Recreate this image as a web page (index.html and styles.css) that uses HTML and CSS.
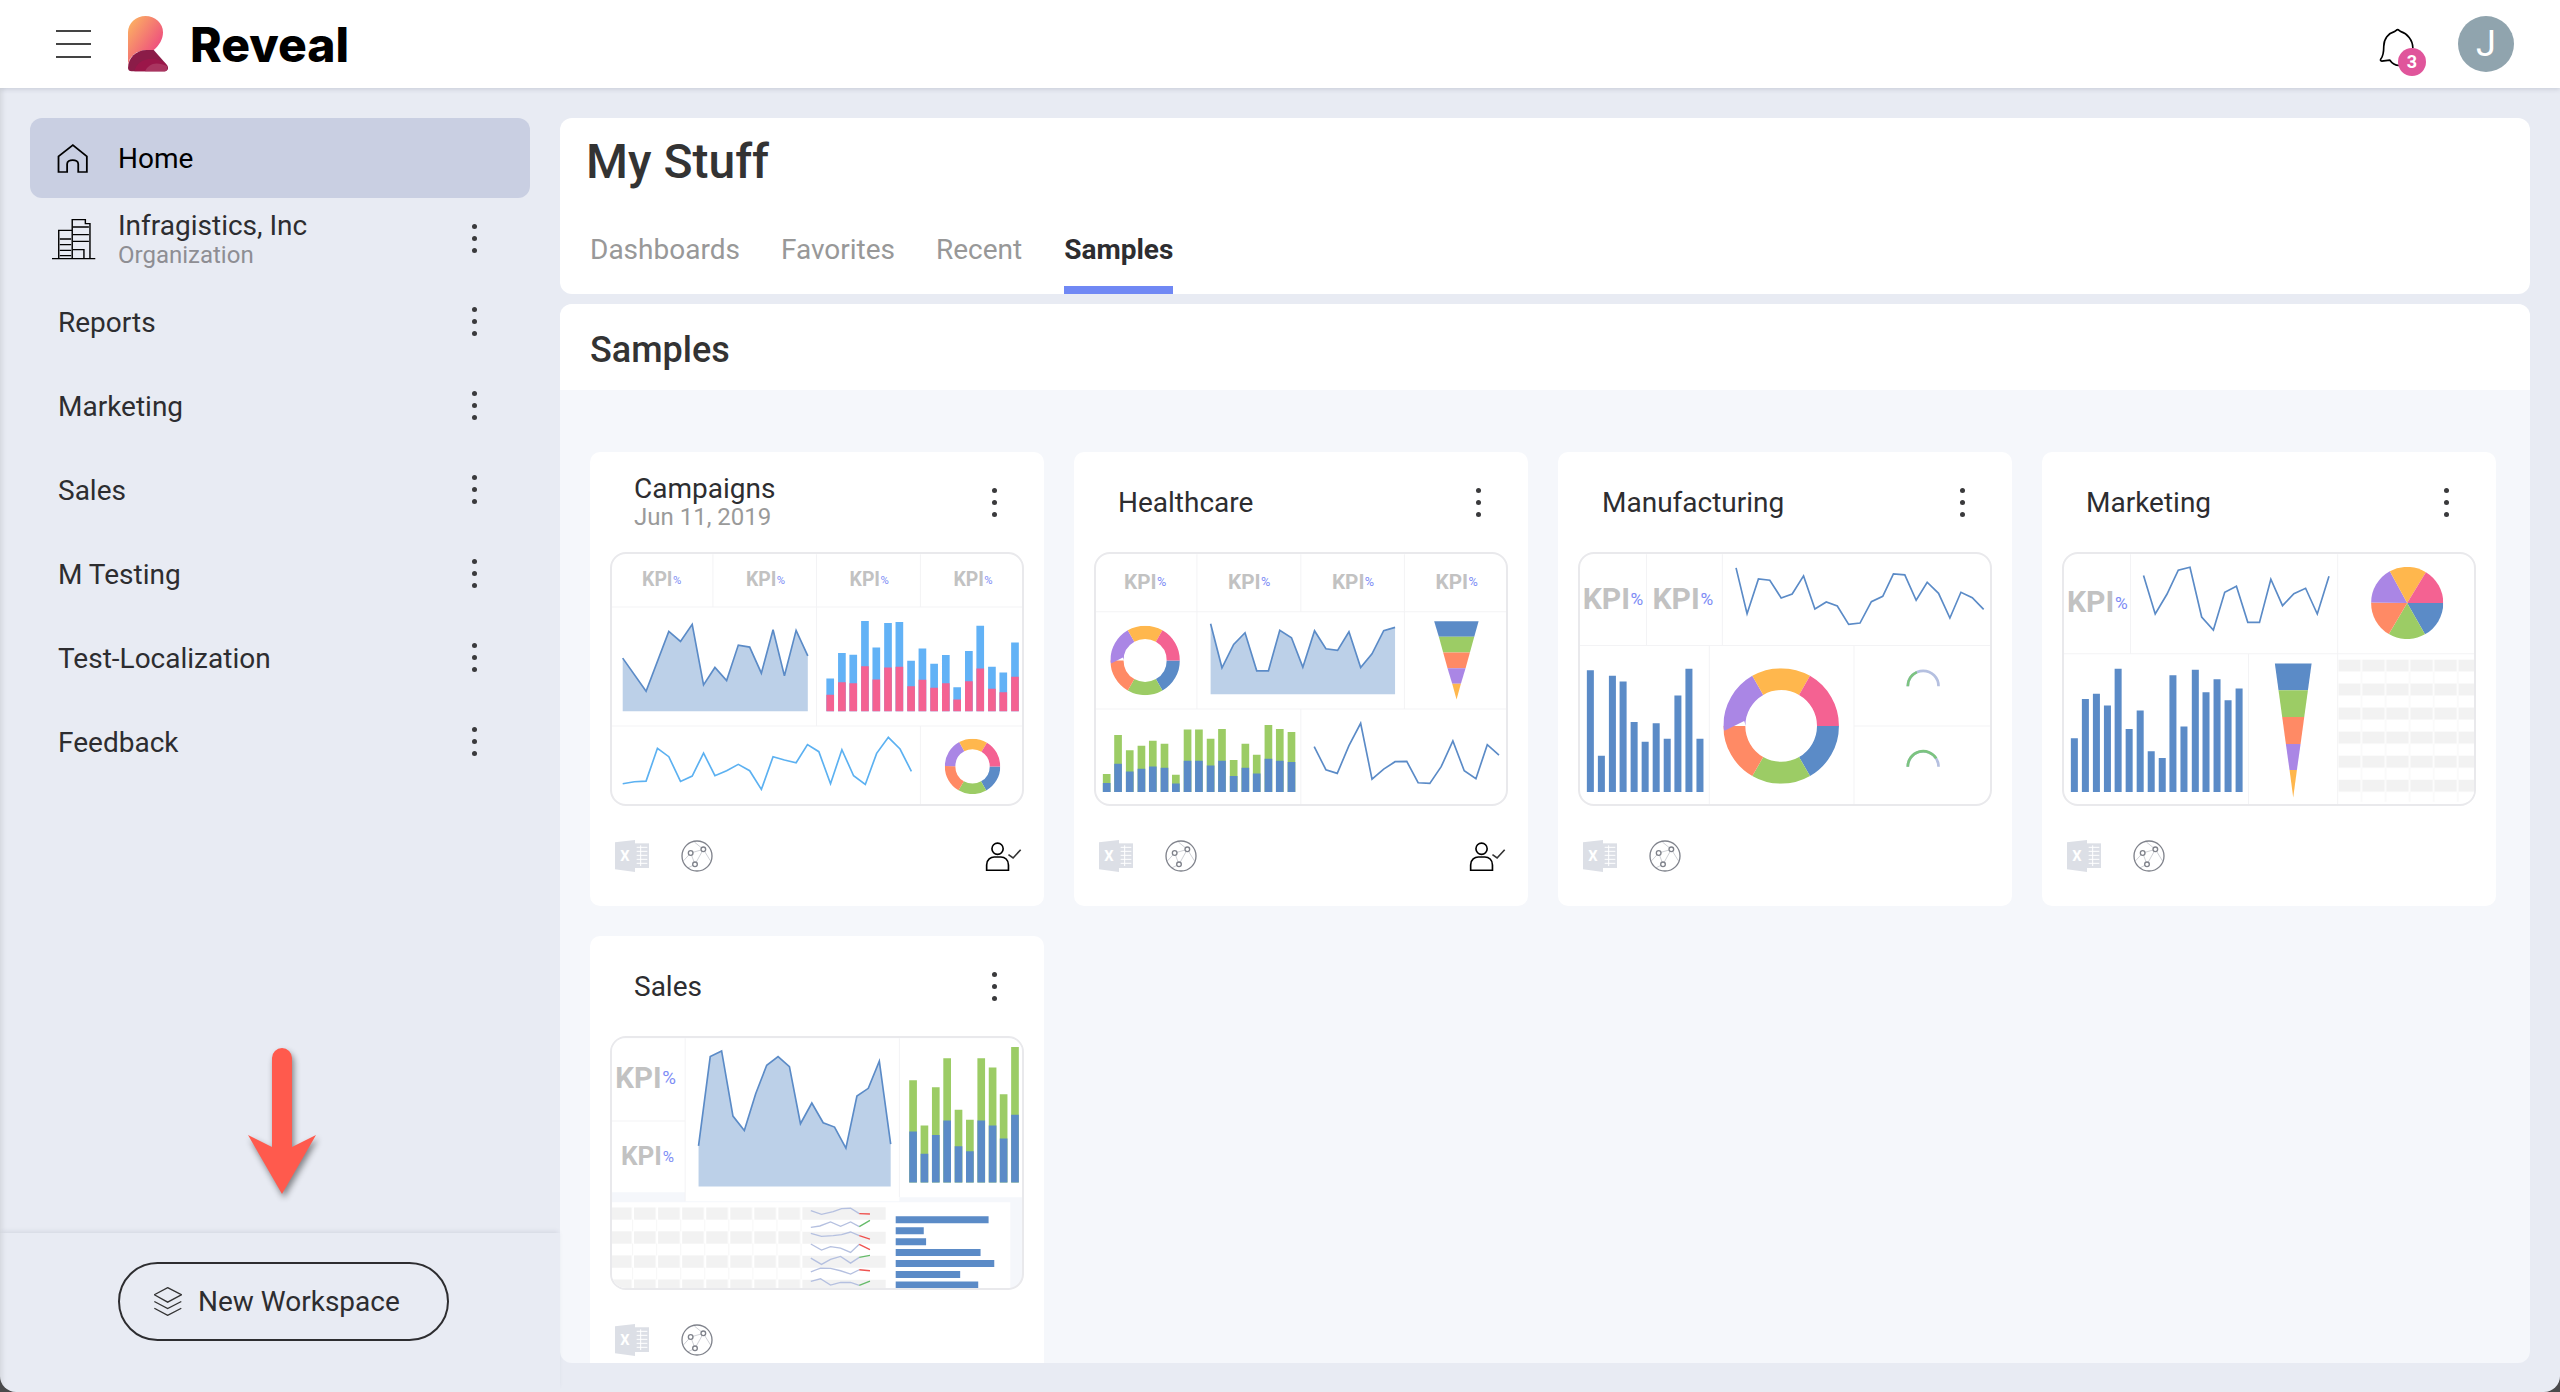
FILE: index.html
```html
<!DOCTYPE html>
<html lang="en">
<head>
    <meta charset="utf-8" />
    <title>Reveal - My Stuff</title>
    <link rel="stylesheet" href="styles.css">
</head>
<body>

<!-- shared icons and chart parts -->
<svg class="sprite" aria-hidden="true">
    <defs>
        <symbol id="i-excel" viewBox="105 1200 102 96">
            <path fill="#dcdfe6" d="M105 1207 165 1200V1296L105 1288Z"/>
            <path fill="#dcdfe6" d="M165 1210H207V1284H165Z"/>
            <path fill="none" stroke="#fff" stroke-width="3" d="M170 1222H202M170 1234H202M170 1246H202M170 1258H202M170 1270H202M182 1216V1278"/>
            <text x="135" y="1263" text-anchor="middle" class="xl">X</text>
        </symbol>
        <symbol id="i-net" viewBox="300 1200 96 96">
            <path fill="none" stroke="#cfd1d6" stroke-width="3" d="M329 1239 367 1228M329 1239 342 1273M367 1228 342 1273M329 1239 308 1262M367 1228 340 1206M367 1228 388 1262M342 1273 320 1284"/>
            <circle cx="348" cy="1248" r="45" fill="none" stroke="#7f828b" stroke-width="4"/>
            <g fill="#fff" stroke="#7f828b" stroke-width="4">
                <circle cx="329" cy="1239" r="7"/><circle cx="367" cy="1228" r="7"/><circle cx="342" cy="1273" r="7"/>
            </g>
        </symbol>
        <symbol id="i-user" viewBox="1214 1205 112 90">
            <g fill="none" stroke="#000" stroke-width="5">
                <circle cx="1252" cy="1225" r="17"/>
                <path d="M1219 1290V1274C1219 1258 1232 1250 1242 1250H1262C1274 1250 1285 1258 1285 1274V1290Z"/>
                <path stroke="#333" d="M1285 1243 1299 1253 1322 1228"/>
            </g>
        </symbol>
        <symbol id="c-donut" viewBox="-100 -100 200 200">
            <g fill="none" stroke-width="38">
                <circle r="81" pathLength="6" stroke-dasharray="1 5" stroke="#5b8bc7"/>
                <circle r="81" pathLength="6" stroke-dasharray="1 5" stroke-dashoffset="-1" stroke="#9ccc65"/>
                <circle r="81" pathLength="6" stroke-dasharray="1 5" stroke-dashoffset="-2" stroke="#ff8a65"/>
                <circle r="81" pathLength="6" stroke-dasharray="1 5" stroke-dashoffset="-3" stroke="#aa86e5"/>
                <circle r="81" pathLength="6" stroke-dasharray="1 5" stroke-dashoffset="-4" stroke="#ffb74d"/>
                <circle r="81" pathLength="6" stroke-dasharray="1 5" stroke-dashoffset="-5" stroke="#f46292"/>
            </g>
        </symbol>
        <symbol id="c-pie" viewBox="-100 -100 200 200">
            <g fill="none" stroke-width="100">
                <circle r="50" pathLength="6" stroke-dasharray="1 5" stroke="#5b8bc7"/>
                <circle r="50" pathLength="6" stroke-dasharray="1 5" stroke-dashoffset="-1" stroke="#9ccc65"/>
                <circle r="50" pathLength="6" stroke-dasharray="1 5" stroke-dashoffset="-2" stroke="#ff8a65"/>
                <circle r="50" pathLength="6" stroke-dasharray="1 5" stroke-dashoffset="-3" stroke="#aa86e5"/>
                <circle r="50" pathLength="6" stroke-dasharray="1 5" stroke-dashoffset="-4" stroke="#ffb74d"/>
                <circle r="50" pathLength="6" stroke-dasharray="1 5" stroke-dashoffset="-5" stroke="#f46292"/>
            </g>
        </symbol>
        <pattern id="p-table" x="955" y="657" width="72" height="72" patternUnits="userSpaceOnUse">
            <rect x="67" width="5" height="72" fill="#fbfbfb"/>
            <rect y="36" width="72" height="36" fill="#fff"/>
            <rect x="68" y="36" width="3" height="36" fill="#f6f6f6"/>
            <rect width="66" height="36" fill="#f2f2f2"/>
        </pattern>
        <pattern id="p-table2" x="92" y="830" width="72" height="72" patternUnits="userSpaceOnUse">
            <rect x="66" y="36" width="3" height="36" fill="#f6f6f6"/>
            <rect width="65" height="37" fill="#f2f2f2"/>
        </pattern>
        <linearGradient id="g-logo" x1="0" y1="0" x2="1" y2="1">
            <stop offset="0" stop-color="#fdbb5f"/>
            <stop offset=".75" stop-color="#ee4f7e"/>
        </linearGradient>
    </defs>
</svg>

<div class="app">
    <header class="topbar">
        <div class="burger"><span></span><span></span><span></span></div>
        <svg class="logo" viewBox="358 47 112 170" preserveAspectRatio="none">
            <path fill="url(#g-logo)" d="M358 96a49 49 0 0 1 98 0c0 20-10 40-26 54h-20c-26 0-52 20-52 50Z"/>
            <path fill="#8b1c48" d="M358 205c0-30 22-55 52-55h20l36 44c8 10 4 21-6 21H368c-6 0-10-4-10-10Z"/>
            <path fill="#9b1649" d="M376 215c4-24 26-40 52-38 12 1 24 6 34 14 8 10 6 24-2 24Z"/>
            <path fill="#a93560" d="M406 215c4-14 18-24 32-24 10 0 20 3 29 8 3 8 0 16-7 16Z"/>
        </svg>
        <div class="brand">Reveal</div>
        <div class="topbar-right">
            <div class="bell">
                <svg viewBox="230 80 120 130" width="40" height="43">
                    <path fill="none" stroke="#000" stroke-width="5" stroke-linejoin="round" d="M292 88c-4 0-6 5-10 6-18 5-32 22-32 44 0 18-2 30-9 39-2 3-1 6 3 6l24-3c8 12 20 18 34 16M292 88c4 0 6 5 10 6 18 5 36 25 36 50"/>
                </svg>
                <span class="badge">3</span>
            </div>
            <div class="avatar">J</div>
        </div>
    </header>

    <div class="layout">
        <aside class="sidebar">
            <nav class="nav">
                <div class="nav-item nav-item--active">
                    <svg class="nav-icon" viewBox="160 428 92 92" preserveAspectRatio="none" width="33" height="31">
                        <path fill="none" stroke="#000" stroke-width="5" d="M167 514V468L207 434 246 468V514H222V490C222 475 191 475 191 490V514Z"/>
                    </svg>
                    Home
                </div>
                <div class="nav-item nav-item--org">
                    <svg class="nav-icon nav-icon--org" viewBox="146 655 124 126" preserveAspectRatio="none" width="44" height="42">
                        <g fill="none" stroke="#000" stroke-width="4">
                            <path d="M146 777H268"/>
                            <path d="M165 777V692H203M203 777V660H240V672H253V777"/>
                            <path d="M168 718H200M168 735H200M168 752H200M168 768H200M205 682H250M205 705H250M205 725H250"/>
                            <path d="M205 750H236V777"/>
                        </g>
                    </svg>
                    <div class="org-text">
                        <div>Infragistics, Inc</div>
                        <div class="org-sub">Organization</div>
                    </div>
                    <span class="kebab"></span>
                </div>
                <div class="nav-item">Reports<span class="kebab"></span></div>
                <div class="nav-item">Marketing<span class="kebab"></span></div>
                <div class="nav-item">Sales<span class="kebab"></span></div>
                <div class="nav-item">M Testing<span class="kebab"></span></div>
                <div class="nav-item">Test-Localization<span class="kebab"></span></div>
                <div class="nav-item">Feedback<span class="kebab"></span></div>
            </nav>
            <div class="sidebar-foot">
                <button class="btn-new">
                    <svg viewBox="430 803 82 86" preserveAspectRatio="none" width="28" height="29">
                        <path fill="none" stroke="#333" stroke-width="4" d="M470 805 510 826 470 848 431 826ZM431 846 470 867 510 846M431 866 470 887 510 866"/>
                    </svg>
                    New Workspace
                </button>
            </div>
            <!-- annotation arrow lying over the sidebar -->
            <svg class="arrow" viewBox="0 0 68 146" width="68" height="146">
                <path fill="#ff5a4d" d="M24 10a10 10 0 0 1 20 0V99L68 87 34 146 0 87 24 99Z"/>
            </svg>
        </aside>

        <main class="main">
            <section class="panel panel--head">
                <h1>My Stuff</h1>
                <div class="tabs">
                    <div class="tab">Dashboards</div>
                    <div class="tab">Favorites</div>
                    <div class="tab">Recent</div>
                    <div class="tab tab--active">Samples</div>
                </div>
            </section>

            <section class="panel panel--body">
                <h2>Samples</h2>
                <div class="cards">

                    <article class="card">
                        <div class="card-head">
                            <div class="card-title">
                                <div>Campaigns</div>
                                <div class="card-date">Jun 11, 2019</div>
                            </div>
                            <span class="kebab"></span>
                        </div>
                        <div class="thumb">
                            <svg viewBox="98 342 1227 747">
                                <path class="grid" d="M400 342V500M710 342V856M1021 342V500M98 500H1325M98 856H1325M1021 856V1090"/>
                                <text class="kpi" x="188" y="437" font-size="58">KPI<tspan class="pct" font-size="34" dx="1" dy="-7">%</tspan></text>
                                <text class="kpi" x="499" y="437" font-size="58">KPI<tspan class="pct" font-size="34" dx="1" dy="-7">%</tspan></text>
                                <text class="kpi" x="809" y="437" font-size="58">KPI<tspan class="pct" font-size="34" dx="1" dy="-7">%</tspan></text>
                                <text class="kpi" x="1120" y="437" font-size="58">KPI<tspan class="pct" font-size="34" dx="1" dy="-7">%</tspan></text>
                                <path class="area" d="M130 812V653L200 752 268 573 303 603 338 552 372 733 406 681 441 720 476 614 510 620 545 698 580 568 614 706 649 570 684 646V812Z"/>
                                <path class="line" d="M130 653 200 752 268 573 303 603 338 552 372 733 406 681 441 720 476 614 510 620 545 698 580 568 614 706 649 570 684 646"/>
                                <path class="bars bars--w23" stroke="#62b2f6" d="M751 812V714M786 812V638M820 812V643M855 812V542M889 812V621M924 812V548M958 812V545M993 812V661M1027 812V624M1062 812V670M1097 812V644M1131 812V740M1166 812V632M1200 812V556M1235 812V679M1269 812V696M1304 812V606"/>
                                <path class="bars bars--w23" stroke="#f46292" d="M751 812V763M786 812V725M820 812V728M855 812V677M889 812V717M924 812V681M958 812V679M993 812V737M1027 812V718M1062 812V742M1097 812V728M1131 812V777M1166 812V722M1200 812V684M1235 812V745M1269 812V755M1304 812V709"/>
                                <path class="line line--sky" d="M130 1029 165 1023 200 1021 234 923 268 948 303 1022 338 1006 372 937 406 1005 441 990 476 971 510 990 545 1046 580 948 614 958 649 966 683 912 717 933 752 1029 786 927 821 1005 856 1031 890 938 925 890 960 925 994 992"/>
                                <use href="#c-donut" x="1094" y="894" width="166" height="166"/>
                            </svg>
                        </div>
                        <div class="card-foot">
                            <svg class="i-excel"><use href="#i-excel"/></svg>
                            <svg class="i-net"><use href="#i-net"/></svg>
                            <svg class="i-user"><use href="#i-user"/></svg>
                        </div>
                    </article>

                    <article class="card">
                        <div class="card-head">
                            <div class="card-title">Healthcare</div>
                            <span class="kebab"></span>
                        </div>
                        <div class="thumb">
                            <svg viewBox="110 342 1227 747">
                                <path class="grid" d="M412 342V805M723 342V514M1033 342V805M110 514H1337M110 805H1337M723 805V1090"/>
                                <text class="kpi" x="194" y="445" font-size="62">KPI<tspan class="pct" font-size="38" dx="1" dy="-7">%</tspan></text>
                                <text class="kpi" x="505" y="445" font-size="62">KPI<tspan class="pct" font-size="38" dx="1" dy="-7">%</tspan></text>
                                <text class="kpi" x="816" y="445" font-size="62">KPI<tspan class="pct" font-size="38" dx="1" dy="-7">%</tspan></text>
                                <text class="kpi" x="1126" y="445" font-size="62">KPI<tspan class="pct" font-size="38" dx="1" dy="-7">%</tspan></text>
                                <use href="#c-donut" x="153" y="556" width="208" height="208"/>
                                <path class="area" d="M453 761V550L487 682 522 612 556 577 591 691 626 691 660 570 695 592 729 680 764 571 798 625 833 630 867 574 902 681 936 640 971 571 1005 561V761Z"/>
                                <path class="line" d="M453 550 487 682 522 612 556 577 591 691 626 691 660 570 695 592 729 680 764 571 798 625 833 630 867 574 902 681 936 640 971 571 1005 561"/>
                                <path fill="#5b8bc7" d="M1122 543H1255L1242 589H1136Z"/>
                                <path fill="#9ccc65" d="M1136 589H1242L1229 636H1149Z"/>
                                <path fill="#ff8a65" d="M1149 636H1229L1216 683H1162Z"/>
                                <path fill="#aa86e5" d="M1162 683H1216L1202 730H1176Z"/>
                                <path fill="#ffb74d" d="M1176 730H1202L1189 777Z"/>
                                <path class="bars bars--w23" stroke="#9ccc65" d="M142 1054V1000M176 1054V883M211 1054V929M246 1054V915M280 1054V900M315 1054V909M349 1054V1002M384 1054V867M418 1054V867M453 1054V894M487 1054V865M522 1054V958M557 1054V909M591 1054V942M626 1054V853M660 1054V865M695 1054V874"/>
                                <path class="bars bars--w23" stroke="#5b8bc7" d="M142 1054V1027M176 1054V969M211 1054V992M246 1054V984M280 1054V977M315 1054V981M349 1054V1028M384 1054V960M418 1054V960M453 1054V974M487 1054V960M522 1054V1006M557 1054V981M591 1054V998M626 1054V954M660 1054V960M695 1054V964"/>
                                <path class="line" d="M763 918 798 987 832 998 867 915 902 848 936 1015 971 985 1005 963 1040 962 1074 1026 1109 1028 1143 978 1178 901 1212 990 1247 1014 1281 912 1316 943"/>
                            </svg>
                        </div>
                        <div class="card-foot">
                            <svg class="i-excel"><use href="#i-excel"/></svg>
                            <svg class="i-net"><use href="#i-net"/></svg>
                            <svg class="i-user"><use href="#i-user"/></svg>
                        </div>
                    </article>

                    <article class="card">
                        <div class="card-head">
                            <div class="card-title">Manufacturing</div>
                            <span class="kebab"></span>
                        </div>
                        <div class="thumb">
                            <svg viewBox="122 342 1227 747">
                                <path class="grid" d="M321 342V615M548 342V615M122 615H1349M509 615V1090M942 615V1090M942 856H1349"/>
                                <text class="kpi" x="130" y="505" font-size="90">KPI<tspan class="pct" font-size="52" dx="2" dy="-10">%</tspan></text>
                                <text class="kpi" x="339" y="505" font-size="90">KPI<tspan class="pct" font-size="52" dx="2" dy="-10">%</tspan></text>
                                <path class="line" d="M589 383 622 520 656 416 690 420 724 473 757 461 791 407 825 506 859 485 892 497 926 552 960 548 994 484 1028 468 1060 401 1094 404 1128 480 1161 426 1195 459 1229 533 1262 456 1296 472 1330 507"/>
                                <path class="bars bars--w21" stroke="#5b8bc7" d="M153 1054V689M186 1054V945M219 1054V706M251 1054V723M284 1054V844M317 1054V903M350 1054V848M383 1054V894M415 1054V765M448 1054V685M481 1054V894"/>
                                <use href="#c-donut" x="551" y="683" width="346" height="346"/>
                                <path class="gauge" d="M1103 737A46 46 0 0 1 1195 737"/>
                                <path class="gauge gauge--on" d="M1103 737A46 46 0 0 1 1130 695"/>
                                <path class="gauge" d="M1103 978A46 46 0 0 1 1195 978"/>
                                <path class="gauge gauge--on" d="M1103 978A46 46 0 0 1 1188 953"/>
                            </svg>
                        </div>
                        <div class="card-foot">
                            <svg class="i-excel"><use href="#i-excel"/></svg>
                            <svg class="i-net"><use href="#i-net"/></svg>
                        </div>
                    </article>

                    <article class="card">
                        <div class="card-head">
                            <div class="card-title">Marketing</div>
                            <span class="kebab"></span>
                        </div>
                        <div class="thumb">
                            <svg viewBox="134 342 1227 747">
                                <path class="grid" d="M333 342V640M953 342V1090M134 640H1361M686 640V1090"/>
                                <text class="kpi" x="143" y="516" font-size="90">KPI<tspan class="pct" font-size="52" dx="2" dy="-10">%</tspan></text>
                                <path class="line" d="M372 406 407 521 442 462 476 390 511 381 546 530 581 569 615 456 650 438 684 546 719 546 753 417 788 496 822 460 857 444 892 521 927 408"/>
                                <use href="#c-pie" x="1053" y="380" width="216" height="216"/>
                                <path class="bars bars--w21" stroke="#5b8bc7" d="M165 1054V893M198 1054V775M231 1054V760M264 1054V795M296 1054V685M329 1054V865M362 1054V810M395 1054V932M428 1054V952M460 1054V704M493 1054V858M527 1054V688M559 1054V755M592 1054V716M625 1054V779M658 1054V744"/>
                                <path fill="#5b8bc7" d="M765 669H875L864 749H776Z"/>
                                <path fill="#9ccc65" d="M776 749H864L853 829H787Z"/>
                                <path fill="#ff8a65" d="M787 829H853L842 910H798Z"/>
                                <path fill="#aa86e5" d="M798 910H842L831 988H809Z"/>
                                <path fill="#ffb74d" d="M809 988H831L820 1070Z"/>
                                <rect x="955" y="657" width="406" height="426" fill="url(#p-table)"/>
                            </svg>
                        </div>
                        <div class="card-foot">
                            <svg class="i-excel"><use href="#i-excel"/></svg>
                            <svg class="i-net"><use href="#i-net"/></svg>
                        </div>
                    </article>

                    <article class="card">
                        <div class="card-head">
                            <div class="card-title">Sales</div>
                            <span class="kebab"></span>
                        </div>
                        <div class="thumb thumb--pale">
                            <svg viewBox="98 324 1227 747">
                                <path fill="#fff" d="M98 324H958V812H317V785H98ZM958 324H1325V800H958ZM98 815H917V1090H98ZM917 815H1290V1090H917Z"/>
                                <path class="grid" d="M317 324V812M958 324V800M98 572H317"/>
                                <text class="kpi" x="108" y="474" font-size="88">KPI<tspan class="pct" font-size="56" dx="2" dy="-12">%</tspan></text>
                                <text class="kpi" x="125" y="705" font-size="78">KPI<tspan class="pct" font-size="46" dx="2" dy="-10">%</tspan></text>
                                <path class="area" d="M357 768V646L392 379 426 362 460 557 494 600 528 490 561 405 595 379 629 409 662 580 696 518 730 577 764 590 798 653 831 497 865 474 898 393 932 641V768Z"/>
                                <path class="line" d="M357 646 392 379 426 362 460 557 494 600 528 490 561 405 595 379 629 409 662 580 696 518 730 577 764 590 798 653 831 497 865 474 898 393 932 641"/>
                                <path class="bars bars--w23" stroke="#9ccc65" d="M999 756V450M1033 756V585M1067 756V471M1101 756V384M1135 756V538M1169 756V568M1203 756V384M1237 756V412M1270 756V492M1304 756V350"/>
                                <path class="bars bars--w23" stroke="#5b8bc7" d="M999 756V603M1033 756V670M1067 756V614M1101 756V570M1135 756V647M1169 756V662M1203 756V570M1237 756V585M1270 756V624M1304 756V553"/>
                                <rect x="92" y="830" width="576" height="260" fill="url(#p-table2)"/>
                                <path fill="#f2f2f2" d="M668 830H917V867H668ZM668 903H917V939H668ZM668 975H917V1011H668ZM668 1047H917V1083H668Z"/>
                                <path class="spark" d="M693 840 725 851 760 843 785 834 812 833 838 849M693 890 720 886 752 874 782 887 812 874 838 888M693 908 725 917 760 915 785 912 812 904 838 915M693 940 725 958 752 948 782 952 812 965 838 941M693 982 725 1001 752 986 782 977 812 997 838 980M693 1023 722 1012 752 1013 782 1020 812 1030 838 1017M693 1052 722 1044 752 1063 782 1055 812 1055 838 1064"/>
                                <path class="spark spark--down" d="M838 849 870 850M838 915 870 925M838 941 870 957M838 1017 870 1020"/>
                                <path class="spark spark--up" d="M838 888 870 869M838 980 870 974M838 1064 870 1051"/>
                                <path class="bars bars--w21" stroke="#5b8bc7" d="M947 867H1225M947 900H1031M947 933H1038M947 965H1201M947 998H1242M947 1031H1140M947 1063H1194"/>
                            </svg>
                        </div>
                        <div class="card-foot">
                            <svg class="i-excel"><use href="#i-excel"/></svg>
                            <svg class="i-net"><use href="#i-net"/></svg>
                        </div>
                    </article>

                </div>
            </section>
        </main>
    </div>
</div>

</body>
</html>
```

FILE: styles.css
```css
:root{
    --bg:#e8ebf3;
    --pale:#f5f7fb;
    --text:#2d2d30;
    --muted:#8e8e93;
    --accent:#7088f4;
    --blue:#5b8bc7;
}
*{
    box-sizing:border-box;
}
html,body{
    height:100%;
}
body{
    margin:0;
    background:#4a4a4c;
    font-family:Roboto,"Liberation Sans",sans-serif;
    color:var(--text);
    overflow:hidden;
}
h1,h2{
    margin:0;
}
.sprite{
    position:absolute;
    width:0;
    height:0;
}
.xl{
    font-family:Roboto,sans-serif;
    font-weight:700;
    font-size:44px;
    fill:#fff;
}
.app{
    height:100%;
    display:flex;
    flex-direction:column;
    background:var(--bg);
    border-radius:0 0 16px 16px;
    overflow:hidden;
}

/* top bar */
.topbar{
    flex:none;
    height:88px;
    display:flex;
    align-items:center;
    padding:0 46px 0 56px;
    background:#fff;
    box-shadow:0 1px 5px rgba(40,50,80,.18);
    position:relative;
    z-index:2;
}
.burger{
    width:35px;
    display:flex;
    flex-direction:column;
    gap:11px;
}
.burger span{
    height:2px;
    background:#444;
}
.logo{
    width:40px;
    height:56px;
    margin-left:37px;
}
.brand{
    margin-left:22px;
    font-family:Inter,Roboto,sans-serif;
    font-weight:800;
    font-size:48px;
    color:#000;
}
.topbar-right{
    margin-left:auto;
    display:flex;
    align-items:center;
    gap:41px;
}
.bell{
    position:relative;
    width:40px;
    height:43px;
    margin-top:8px;
}
.bell svg{
    display:block;
}
.badge{
    position:absolute;
    left:21px;
    top:21px;
    width:28px;
    height:28px;
    border-radius:50%;
    background:#e0559b;
    color:#fff;
    font-size:18px;
    font-weight:700;
    line-height:28px;
    text-align:center;
}
.avatar{
    width:56px;
    height:56px;
    border-radius:50%;
    background:#90a4ae;
    color:#fff;
    font-size:36px;
    line-height:56px;
    text-align:center;
}

/* layout */
.layout{
    flex:1;
    min-height:0;
    display:flex;
}
.sidebar{
    flex:none;
    width:560px;
    display:flex;
    flex-direction:column;
    position:relative;
    box-shadow:inset 7px 0 6px -6px rgba(0,0,0,.12);
}
.nav{
    flex:1;
    padding:30px 0 0;
}
.nav-item{
    width:500px;
    height:84px;
    margin-left:30px;
    padding-left:28px;
    display:flex;
    align-items:center;
    font-size:28px;
    position:relative;
}
.nav-item--active{
    height:80px;
    padding-left:26px;
    border-radius:12px;
    background:#c9cfe2;
    color:#000;
}
.nav-item--org{
    height:82px;
    padding-left:22px;
}
.nav-icon{
    flex:none;
    margin-right:29px;
}
.nav-icon--org{
    margin-right:22px;
}
.org-text{
    line-height:30px;
    padding-top:2px;
}
.org-sub{
    font-size:24px;
    line-height:28px;
    color:var(--muted);
}
.kebab{
    width:5px;
    height:5px;
    border-radius:50%;
    background:#3a3a3c;
    box-shadow:0 -12px 0 #3a3a3c,0 12px 0 #3a3a3c;
    flex:none;
}
.nav-item .kebab{
    position:absolute;
    left:442px;
    top:50%;
    margin-top:-3px;
}
.sidebar-foot{
    flex:none;
    height:159px;
    display:flex;
    padding:29px 0 0 118px;
    box-shadow:0 -3px 5px -2px rgba(40,50,80,.12);
}
.btn-new{
    width:331px;
    height:79px;
    display:flex;
    align-items:center;
    gap:16px;
    padding:0 0 0 34px;
    border:2px solid var(--text);
    border-radius:40px;
    background:none;
    color:var(--text);
    font:28px Roboto,sans-serif;
}
.arrow{
    position:absolute;
    left:248px;
    top:960px;
    filter:drop-shadow(2px 4px 3px rgba(0,0,0,.45));
}

/* main column */
.main{
    flex:1;
    min-width:0;
    display:flex;
    flex-direction:column;
    gap:10px;
    padding:30px 30px 29px 0;
}
.panel{
    border-radius:12px;
    background:#fff;
}
.panel--head{
    flex:none;
    height:176px;
    padding:14px 26px 0;
}
.panel--head h1{
    font-size:48px;
    font-weight:500;
    line-height:60px;
    color:#333;
}
.tabs{
    display:flex;
    gap:41px;
    margin-top:26px;
    padding-left:4px;
}
.tab{
    height:76px;
    padding-top:15px;
    font-size:28px;
    color:#989898;
}
.tab--active{
    margin-left:1px;
    color:#2d2d30;
    font-weight:700;
    border-bottom:8px solid var(--accent);
}
.panel--body{
    flex:1;
    min-height:0;
    overflow:hidden;
    background:var(--pale);
}
.panel--body h2{
    height:86px;
    padding:0 30px;
    background:#fff;
    font-size:36px;
    font-weight:500;
    line-height:92px;
    color:#333;
}

/* sample cards */
.cards{
    display:grid;
    grid-template-columns:repeat(4,454px);
    gap:30px;
    padding:62px 30px;
}
.card{
    height:454px;
    border-radius:10px;
    background:#fff;
}
.card-head{
    height:100px;
    display:flex;
    align-items:center;
    justify-content:space-between;
    padding:0 47px 0 44px;
    font-size:28px;
    line-height:29px;
}
.card-title{
    padding-top:1px;
}
.card-date{
    font-size:24px;
    color:#9a9a9a;
}
.thumb{
    width:414px;
    height:254px;
    margin-left:20px;
    border:2px solid #e9e9ec;
    border-radius:16px;
    overflow:hidden;
    background:#fff;
}
.thumb--pale{
    background:var(--pale);
}
.thumb svg{
    display:block;
    width:410px;
    height:250px;
}
.card-foot{
    height:100px;
    padding:34px 22px 0 25px;
    display:flex;
    align-items:flex-start;
}
.i-excel{
    width:34px;
    height:32px;
}
.i-net{
    width:32px;
    height:32px;
    margin-left:32px;
}
.i-user{
    width:37px;
    height:30px;
    margin-left:auto;
    margin-top:2px;
}

/* chart pieces */
.grid{
    fill:none;
    stroke:#f3f3f5;
    stroke-width:3;
}
.kpi{
    font-family:Roboto,sans-serif;
    font-weight:700;
    fill:#c2c2c2;
}
.pct{
    font-weight:400;
    fill:#7d8cf5;
}
.area{
    fill:#bcd0e8;
}
.line{
    fill:none;
    stroke:var(--blue);
    stroke-width:5;
}
.line--sky{
    stroke:#5cb1f1;
}
.bars{
    fill:none;
}
.bars--w23{
    stroke-width:23;
}
.bars--w21{
    stroke-width:21;
}
.gauge{
    fill:none;
    stroke:#b5c0e0;
    stroke-width:8;
}
.gauge--on{
    stroke:#7cc47f;
}
.spark{
    fill:none;
    stroke:#b5c0e0;
    stroke-width:4;
}
.spark--down{
    stroke:#ef5350;
}
.spark--up{
    stroke:#66bb6a;
}
```
